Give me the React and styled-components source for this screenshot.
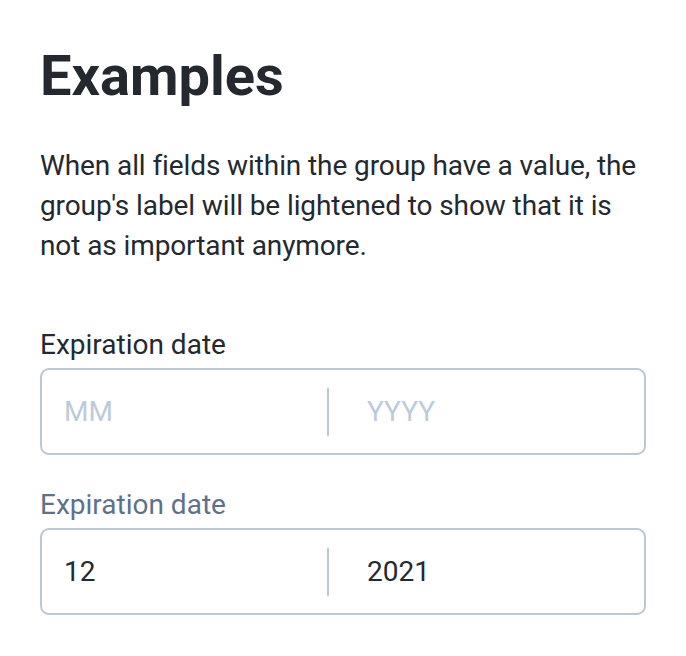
import React from 'react';
import styled, { createGlobalStyle } from 'styled-components';

const GlobalStyle = createGlobalStyle`
  body {
    margin: 0;
    background: #ffffff;
    font-family: Roboto, "Noto Sans", sans-serif;
    color: #24292f;
  }
`;

const Page = styled.div`
  padding: 40px 40px 0 40px;
  display: flex;
  flex-direction: column;
`;

const Title = styled.h1`
  margin: 0;
  font-size: 56px;
  font-weight: 700;
  line-height: 72px;
  color: #24292f;
`;

const Intro = styled.p`
  margin: 34px 0 0 0;
  font-size: 28px;
  line-height: 40px;
  letter-spacing: -0.1px;
  color: #24292f;
`;

const Group = styled.div`
  display: flex;
  flex-direction: column;
  margin-top: ${(p) => p.$top}px;
`;

const Label = styled.div`
  font-size: 28px;
  line-height: 32px;
  color: ${(p) => (p.$done ? '#5f7189' : '#24292f')};
  margin-bottom: 7px;
`;

const Box = styled.div`
  display: flex;
  align-items: center;
  height: 87px;
  box-sizing: border-box;
  border: 2px solid #bcc7d5;
  border-radius: 9px;
`;

const Field = styled.input`
  flex: ${(p) => (p.$first ? '0 0 285px' : '1 1 auto')};
  min-width: 0;
  box-sizing: border-box;
  border: none;
  outline: none;
  background: transparent;
  font-family: Roboto, sans-serif;
  font-size: 28px;
  color: #24292f;
  padding: 0 0 0 ${(p) => (p.$first ? 22 : 38)}px;
  &::placeholder {
    color: #bccbdb;
  }
`;

const Divider = styled.div`
  flex: 0 0 2px;
  height: 48px;
  background: #bcc7d5;
`;

const DateGroup = ({ top, values }) => {
  const done = values.every((v) => v !== '');
  return (
    <Group $top={top}>
      <Label $done={done}>Expiration date</Label>
      <Box>
        <Field $first placeholder="MM" defaultValue={values[0]} />
        <Divider />
        <Field placeholder="YYYY" defaultValue={values[1]} />
      </Box>
    </Group>
  );
};

const App = () => (
  <>
    <GlobalStyle />
    <Page>
      <Title>Examples</Title>
      <Intro>
        When all fields within the group have a value, the group's label will be
        lightened to show that it is not as important anymore.
      </Intro>
      <DateGroup top={63} values={['', '']} />
      <DateGroup top={34} values={['12', '2021']} />
    </Page>
  </>
);

export default App;
